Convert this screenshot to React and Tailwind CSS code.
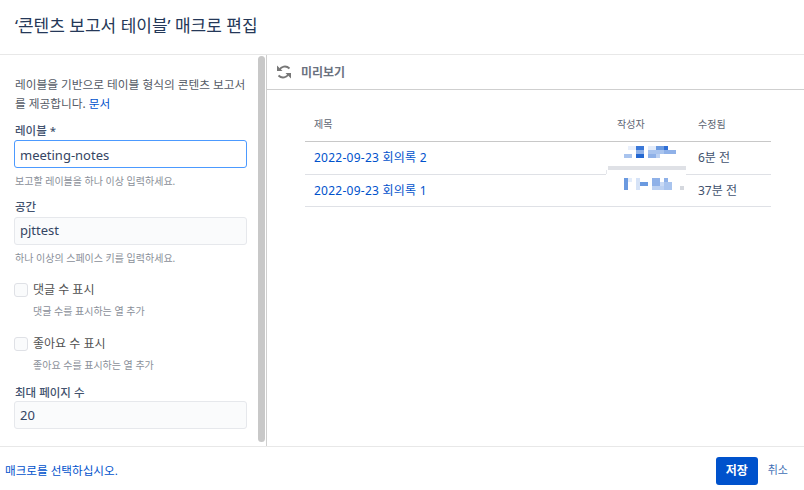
const font = { fontFamily: '"Noto Sans", "Noto Sans CJK KR", sans-serif' };

// blurred author names, coordinates taken from the row area
const blocks = [
  [18, 12, 8, 4, '#a9c4ee'], [22, 4, 8, 4, '#e8effb'], [30, 4, 8, 4, '#3b78d8'], [30, 8, 8, 4, '#8fb1e8'], [30, 12, 8, 4, '#2468d2'],
  [42, 4, 8, 4, '#e3ecfa'], [42, 8, 16, 4, '#a9c4ee'], [50, 4, 8, 4, '#6b9ae0'], [42, 12, 8, 4, '#8fb1e8'], [50, 12, 4, 4, '#bcd1f2'],
  [58, 8, 4, 4, '#8fb1e8'], [58, 4, 4, 4, '#2f6fd6'], [62, 8, 8, 4, '#8fb1e8'],
  [18, 36, 4, 12, '#6b9ae0'], [22, 36, 4, 4, '#e3ecfa'], [30, 36, 4, 12, '#d6e3f7'], [34, 40, 8, 4, '#6b9ae0'],
  [46, 36, 8, 8, '#8fb1e8'], [46, 44, 12, 4, '#bcd1f2'], [54, 40, 4, 4, '#c9daf5'], [58, 36, 4, 4, '#8fb1e8'], [58, 40, 8, 8, '#a9c4ee'],
  [74, 44, 4, 4, '#d5d8de'],
];

const AuthorBlur = () => (
  <svg width="80" height="64" className="absolute left-[301px] top-0">
    <rect x="0" y="28" width="80" height="6" fill="#ffffff" />
    <rect x="2" y="24" width="78" height="4" fill="#dfe1e6" />
    <rect x="0" y="28" width="1" height="4" fill="#e6e8ec" />
    {blocks.map(([x, y, w, h, fill], i) => (
      <rect key={i} x={x} y={y} width={w} height={h} fill={fill} />
    ))}
  </svg>
);

const SyncIcon = () => (
  <svg width="16" height="16" viewBox="0 0 16 16" className="text-[#777777]">
    <path d="M3.5 6C5 2.5 10 1 13.5 4.5" fill="none" stroke="currentColor" strokeWidth="1.8" />
    <path d="M1 1.5v5.5h5.5z" fill="currentColor" />
    <path d="M12.5 10C11 13.5 6 15 2.5 11.5" fill="none" stroke="currentColor" strokeWidth="1.8" />
    <path d="M15 14.5V9H9.5z" fill="currentColor" />
  </svg>
);

const Hint = ({ children, className = '' }) => (
  <p className={`text-[10px] leading-[14px] text-[#8a8f99] ${className}`}>{children}</p>
);

const Label = ({ children }) => (
  <label className="block text-[11.5px] leading-[16px] font-medium text-[#42526e]">{children}</label>
);

const Check = ({ label, hint }) => (
  <div>
    <div className="flex items-center gap-[5px]">
      <span className="h-[14px] w-[14px] rounded-[3px] border border-[#dfe1e6] bg-[#fafbfc]" />
      <span className="text-[12px] leading-[16px] text-[#505050]">{label}</span>
    </div>
    <Hint className="mt-[6px] pl-[19px]">{hint}</Hint>
  </div>
);

export default function App() {
  const rows = [
    { title: '2022-09-23 회의록 2', when: '6분 전', h: 'h-[33px]' },
    { title: '2022-09-23 회의록 1', when: '37분 전', h: 'h-[32px]' },
  ];

  return (
    <div style={font} className="flex h-[490px] w-[804px] flex-col overflow-hidden bg-white">
      <header className="flex h-[55px] items-center border-b border-[#e8e8e8] pl-[15px] pb-[3px]">
        <h1 className="text-[17px] font-normal text-[#253858]">‘콘텐츠 보고서 테이블’ 매크로 편집</h1>
      </header>

      <div className="flex min-h-0 flex-1">
        <aside className="flex w-[267px] shrink-0 border-r border-[#cfcfcf]">
          <div className="w-[258px] shrink-0 pl-[14px] pr-[11px] pt-[20px]">
            <p className="pl-[1px] text-[11.7px] leading-[19px] text-[#555b66]">
              레이블을 기반으로 테이블 형식의 콘텐츠 보고서를 제공합니다. <span className="text-[#0052cc]">문서</span>
            </p>
            <div className="mt-[10px] pl-[1px]">
              <Label>레이블 *</Label>
              <div className="-ml-[1px] mt-[1px] flex h-[28px] items-center rounded-[3px] border border-[#4c9aff] px-[5px] pt-[3px] text-[13px] text-[#344563]">meeting-notes</div>
              <Hint className="mt-[6px]">보고할 레이블을 하나 이상 입력하세요.</Hint>
            </div>
            <div className="mt-[11px] pl-[1px]">
              <Label>공간</Label>
              <div className="-ml-[1px] mt-[2px] flex h-[28px] items-center rounded-[3px] border border-[#e6e8ec] bg-[#fafbfc] px-[5px] text-[13px] text-[#344563]">pjttest</div>
              <Hint className="mt-[6px]">하나 이상의 스페이스 키를 입력하세요.</Hint>
            </div>
            <div className="mt-[17px] flex flex-col gap-[18px]">
              <Check label="댓글 수 표시" hint="댓글 수를 표시하는 열 추가" />
              <Check label="좋아요 수 표시" hint="좋아요 수를 표시하는 열 추가" />
            </div>
            <div className="mt-[13px] pl-[1px]">
              <Label>최대 페이지 수</Label>
              <div className="-ml-[1px] flex h-[28px] items-center rounded-[3px] border border-[#e6e8ec] bg-[#fafbfc] px-[5px] pt-[2px] text-[13px] text-[#344563]">20</div>
            </div>
          </div>
          <div className="mt-[1px] h-[386px] w-[7px] rounded-[4px] bg-[#c8c8c8]" />
        </aside>

        <main className="min-w-0 flex-1">
          <div className="flex h-[35px] items-center gap-[9px] border-b border-[#cfcfcf] pl-[9px]">
            <SyncIcon />
            <span className="pt-[2px] text-[12px] font-semibold text-[#6b7280]">미리보기</span>
          </div>
          <div className="pl-[38px] pr-[33px] pt-[16px]">
            <div className="flex h-[36px] items-center border-b border-[#c8c8c8] pt-[2px] text-[10px] text-[#5e6673]">
              <span className="w-[312px] pl-[9px]">제목</span>
              <span className="w-[81px]">작성자</span>
              <span>수정됨</span>
            </div>
            <div className="relative">
              {rows.map((row) => (
                <div key={row.title} className={`flex items-center border-b border-[#dfe1e6] text-[12px] ${row.h}`}>
                  <span className="w-[393px] pl-[9px] tracking-[0.25px] text-[#0052cc]">{row.title}</span>
                  <span className="text-[#42526e]">{row.when}</span>
                </div>
              ))}
              <AuthorBlur />
            </div>
          </div>
        </main>
      </div>

      <footer className="flex h-[44px] items-center border-t border-[#e8e8e8] pl-[5px] pr-[16px] pt-[4px]">
        <span className="text-[11.6px] text-[#0052cc]">매크로를 선택하십시오.</span>
        <button className="ml-auto h-[28px] w-[42px] rounded-[3px] bg-[#0052cc] text-[12px] font-semibold text-white">저장</button>
        <span className="ml-[10px] text-[11px] text-[#3f6fb5]">취소</span>
      </footer>
    </div>
  );
}
